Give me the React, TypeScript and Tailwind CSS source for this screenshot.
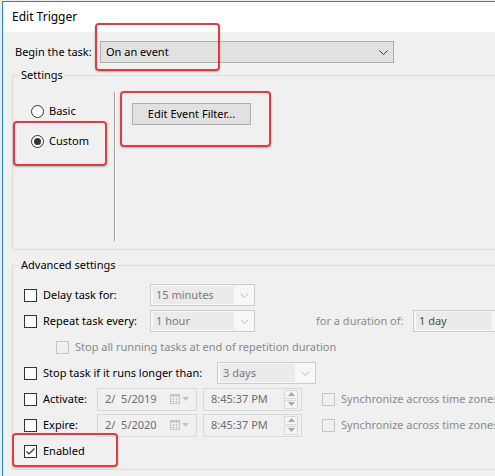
import React from 'react';

const Chevron: React.FC<{ color?: string }> = ({ color = '#333333' }) => (
  <svg width="9" height="5" viewBox="0 0 9 5" fill="none">
    <path d="M0.5 0.5 L4.5 4.5 L8.5 0.5" stroke={color} strokeWidth="1" />
  </svg>
);

const Check: React.FC<{ checked?: boolean; disabled?: boolean }> = ({ checked, disabled }) => (
  <span
    className={
      'flex w-[13px] h-[13px] shrink-0 items-center justify-center border ' +
      (disabled ? 'border-[#c6c6c6] bg-[#f0f0f0]' : 'border-[#333333] bg-white')
    }
  >
    {checked && (
      <svg width="11" height="11" viewBox="0 0 11 11" fill="none">
        <path d="M1.5 5.5 L4 8 L9.5 2.5" stroke="#333333" strokeWidth="1.1" />
      </svg>
    )}
  </span>
);

const Radio: React.FC<{ checked?: boolean; label: string }> = ({ checked, label }) => (
  <div className="flex items-center h-[16px]">
    <span className="flex w-[13px] h-[13px] items-center justify-center rounded-full border border-[#333333] bg-white">
      {checked && <span className="w-[7px] h-[7px] rounded-full bg-[#333333]" />}
    </span>
    <span className="ml-[5px]">{label}</span>
  </div>
);

const Combo: React.FC<{ value: string; width: string; dark?: boolean }> = ({ value, width, dark }) => (
  <div className={'flex h-[22px] items-center border border-[#cccccc] bg-[#f7f7f7] pl-[2px] ' + width}>
    <div className={'h-[18px] flex-1 bg-[#ebebeb] pl-[3px] leading-[18px] ' + (dark ? 'text-[#4d4d4d]' : 'text-[#7a7a7a]')}>
      {value}
    </div>
    <div className="flex w-[20px] justify-center">
      <Chevron color="#bcbcbc" />
    </div>
  </div>
);

const CalendarIcon: React.FC = () => (
  <svg width="10" height="10" viewBox="0 0 10 10" fill="none">
    <rect x="0.5" y="0.5" width="9" height="9" stroke="#c4c4c4" fill="#f7f7f7" />
    <rect x="0.5" y="0.5" width="9" height="2" fill="#c4c4c4" />
    <path d="M3.5 3 V9.5 M6.5 3 V9.5 M1 5 H9.5 M1 7.5 H9.5" stroke="#d2d2d2" strokeWidth="1" />
  </svg>
);

const DateBox: React.FC<{ value: string }> = ({ value }) => (
  <div className="flex h-[23px] w-[100px] items-center border border-[#d9d9d9] pl-[7px] text-[#6d6d6d]">
    <span className="flex-1 whitespace-pre">{value}</span>
    <CalendarIcon />
    <svg className="ml-[2px] mr-[7px]" width="7" height="4" viewBox="0 0 7 4">
      <path d="M0 0 H7 L3.5 4 Z" fill="#c4c4c4" />
    </svg>
  </div>
);

const TimeBox: React.FC<{ value: string }> = ({ value }) => (
  <div className="flex h-[23px] w-[99px] items-center border border-[#d9d9d9] pl-[7px] text-[#6d6d6d]">
    <span className="flex-1">{value}</span>
    <div className="mr-[3px] flex flex-col gap-[1px]">
      <div className="flex h-[9px] w-[14px] items-center justify-center border border-[#d9d9d9] bg-[#f4f4f4]">
        <svg width="7" height="4" viewBox="0 0 7 4">
          <path d="M0 4 H7 L3.5 0 Z" fill="#a8a8a8" />
        </svg>
      </div>
      <div className="flex h-[9px] w-[14px] items-center justify-center border border-[#d9d9d9] bg-[#f4f4f4]">
        <svg width="7" height="4" viewBox="0 0 7 4">
          <path d="M0 0 H7 L3.5 4 Z" fill="#a8a8a8" />
        </svg>
      </div>
    </div>
  </div>
);

const Highlight: React.FC<{ className: string }> = ({ className }) => (
  <div
    className={
      'pointer-events-none absolute rounded-[4px] border-2 border-[#e3393f] shadow-[0_1px_2px_rgba(0,0,0,0.25)] ' +
      className
    }
  />
);

export default function App() {
  return (
    <div className="relative h-[476px] w-[495px] overflow-hidden bg-[#ececec] font-['Noto_Sans','Segoe_UI',sans-serif] text-[11px] leading-[16px] text-black">
      <div className="ml-[2px] mt-[1px] h-[520px] w-[620px] border-l border-t border-[#1f86d8] bg-[#f0f0f0]">
        {/* title bar */}
        <div className="flex h-[30px] items-center bg-white pl-[9px] text-[12px]">Edit Trigger</div>

        <div className="pl-[9px]">
          {/* begin the task */}
          <div className="mt-[9px] flex h-[22px] items-center pl-[3px]">
            <span className="w-[85px]">Begin the task:</span>
            <div className="flex h-[22px] w-[294px] items-center border border-[#adadad] bg-[#e1e1e1] pl-[5px] pr-[5px]">
              <span className="flex-1">On an event</span>
              <Chevron />
            </div>
          </div>

          {/* settings */}
          <fieldset className="mt-[4px] w-[560px] border border-[#dcdcdc]">
            <legend className="ml-[6px] px-[2px]">Settings</legend>
            <div className="flex h-[166px]">
              <div className="flex w-[101px] flex-col gap-[14px] pl-[18px] pt-[20px]">
                <Radio label="Basic" />
                <Radio label="Custom" checked />
              </div>
              <div className="mt-[9px] h-[149px] w-[2px] border-l border-r border-l-[#a0a0a0] border-r-white" />
              <div className="pl-[16px] pt-[20px]">
                <button className="h-[22px] w-[119px] border border-[#adadad] bg-[#e1e1e1] text-center">
                  Edit Event Filter...
                </button>
              </div>
            </div>
          </fieldset>

          {/* advanced settings */}
          <fieldset className="mt-[7px] w-[560px] border border-[#dcdcdc]">
            <legend className="ml-[6px] px-[2px]">Advanced settings</legend>
            <div className="flex h-[196px] flex-col gap-[4px] pl-[11px] pt-[11px]">
              <div className="flex h-[22px] items-center">
                <Check />
                <span className="ml-[6px] w-[107px]">Delay task for:</span>
                <Combo value="15 minutes" width="w-[105px]" />
              </div>
              <div className="flex h-[22px] items-center">
                <Check />
                <span className="ml-[6px] w-[107px]">Repeat task every:</span>
                <Combo value="1 hour" width="w-[105px]" />
                <span className="ml-[61px] w-[97px] text-[#8a8a8a]">for a duration of:</span>
                <Combo value="1 day" width="w-[100px]" dark />
              </div>
              <div className="flex h-[22px] items-center pl-[32px]">
                <Check disabled />
                <span className="ml-[6px] text-[#8a8a8a]">Stop all running tasks at end of repetition duration</span>
              </div>
              <div className="flex h-[22px] items-center">
                <Check />
                <span className="ml-[6px] w-[174px]">Stop task if it runs longer than:</span>
                <Combo value="3 days" width="w-[99px]" />
              </div>
              <div className="flex h-[22px] items-center">
                <Check />
                <span className="ml-[6px] w-[54px]">Activate:</span>
                <DateBox value="2/  5/2019" />
                <div className="ml-[6px]">
                  <TimeBox value="8:45:37 PM" />
                </div>
                <div className="ml-[20px]">
                  <Check disabled />
                </div>
                <span className="ml-[6px] text-[#8a8a8a]">Synchronize across time zones</span>
              </div>
              <div className="flex h-[22px] items-center">
                <Check />
                <span className="ml-[6px] w-[54px]">Expire:</span>
                <DateBox value="2/  5/2020" />
                <div className="ml-[6px]">
                  <TimeBox value="8:45:37 PM" />
                </div>
                <div className="ml-[20px]">
                  <Check disabled />
                </div>
                <span className="ml-[6px] text-[#8a8a8a]">Synchronize across time zones</span>
              </div>
              <div className="flex h-[22px] items-center">
                <Check checked />
                <span className="ml-[6px]">Enabled</span>
              </div>
            </div>
          </fieldset>
        </div>
      </div>

      {/* annotation boxes */}
      <Highlight className="left-[95px] top-[23px] h-[48px] w-[125px]" />
      <Highlight className="left-[13px] top-[121px] h-[45px] w-[94px]" />
      <Highlight className="left-[120px] top-[91px] h-[56px] w-[151px]" />
      <Highlight className="left-[12px] top-[433px] h-[34px] w-[106px]" />
    </div>
  );
}
